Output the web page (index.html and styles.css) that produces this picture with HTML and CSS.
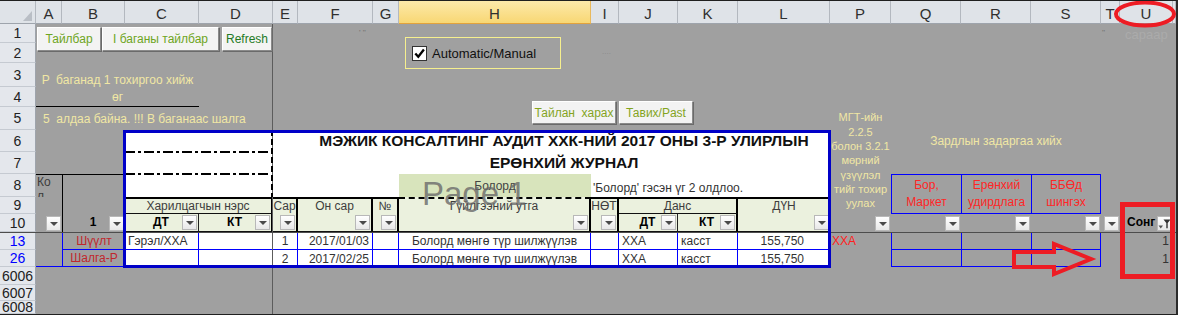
FILE: index.html
```html
<!DOCTYPE html>
<html lang="mn">
<head>
  <meta charset="UTF-8" />
  <title>Ерөнхий журнал</title>
  <link rel="stylesheet" href="styles.css">
</head>
<body>

<div class="sheet">

  <!-- баганын толгой -->
  <div class="ch corner"></div>
  <div class="ch">A</div>
  <div class="ch">B</div>
  <div class="ch">C</div>
  <div class="ch">D</div>
  <div class="ch">E</div>
  <div class="ch">F</div>
  <div class="ch">G</div>
  <div class="ch sel">H</div>
  <div class="ch">I</div>
  <div class="ch">J</div>
  <div class="ch">K</div>
  <div class="ch">L</div>
  <div class="ch">P</div>
  <div class="ch">Q</div>
  <div class="ch">R</div>
  <div class="ch">S</div>
  <div class="ch">T</div>
  <div class="ch">U</div>
  <div class="ch"></div>

  <!-- мөрийн дугаар -->
  <div class="rh">1</div>
  <div class="rh">2</div>
  <div class="rh">3</div>
  <div class="rh">4</div>
  <div class="rh">5</div>
  <div class="rh">6</div>
  <div class="rh">7</div>
  <div class="rh">8</div>
  <div class="rh">9</div>
  <div class="rh">10</div>
  <div class="rh flt">13</div>
  <div class="rh flt">26</div>
  <div class="rh">6006</div>
  <div class="rh">6007</div>
  <div class="rh">6008</div>

  <!-- тайлбар -->
  <div class="note1"><span>P  баганад 1 тохиргоо хийж</span><span>өг</span></div>
  <div class="note2">5  алдаа байна. !!! B баганаас шалга</div>

  <!-- журналын хүснэгт -->
  <div class="tbl"></div>
  <div class="ttl r6">МЭЖИК КОНСАЛТИНГ АУДИТ ХХК-НИЙ 2017 ОНЫ 3-Р УЛИРЛЫН</div>
  <div class="ttl r7">ЕРӨНХИЙ ЖУРНАЛ</div>
  <div class="pb">
    <svg width="148" height="67" viewBox="0 0 148 67">
      <line x1="0" y1="22" x2="146" y2="22" stroke="#000" stroke-width="2" stroke-dasharray="10 3 3 3"/>
      <line x1="0" y1="44" x2="146" y2="44" stroke="#000" stroke-width="2" stroke-dasharray="10 3 3 3"/>
      <line x1="147" y1="0" x2="147" y2="67" stroke="#000" stroke-width="2" stroke-dasharray="6 3"/>
    </svg>
  </div>

  <div class="ko cA r8">Ко<br>л</div>
  <div class="bline"></div>
  <div class="grn cH r8">Болорд</div>
  <div class="found">'Болорд' гэсэн үг 2 олдлоо.</div>

  <!-- толгой мөр -->
  <div class="hc top h-cd">Харилцагчын нэрс</div>
  <div class="hc top h2 br2 cE r9-10"><span class="t">Сар</span><span class="dd"></span></div>
  <div class="hc top h2 br2 cF r9-10"><span class="t">Он сар</span><span class="dd"></span></div>
  <div class="hc top h2 br2 cG r9-10"><span class="t">№</span><span class="dd"></span></div>
  <div class="hc top dash h2 br2 cH r9-10"><span class="t">Гүйлгээний утга</span><span class="dd"></span></div>
  <div class="hc top h2 br2 cI r9-10"><span class="t">НӨТ</span><span class="dd"></span></div>
  <div class="hc top h-jk">Данс</div>
  <div class="hc top h2 cL r9-10"><span class="t">ДҮН</span><span class="dd"></span></div>
  <div class="hc h1 br1 cC r10"><span class="t">ДТ</span><span class="dd"></span></div>
  <div class="hc h1 br2 cD r10"><span class="t">КТ</span><span class="dd"></span></div>
  <div class="hc h1 br1 cJ r10"><span class="t">ДТ</span><span class="dd"></span></div>
  <div class="hc h1 br2 cK r10"><span class="t">КТ</span><span class="dd"></span></div>

  <div class="fc cA r10"><span class="dd"></span></div>
  <div class="fc cB r10"><span class="t b">1</span><span class="dd"></span></div>

  <!-- өгөгдөл -->
  <div class="lbl cA r26 bb"></div>
  <div class="lbl cB r13 bl bb">Шүүлт</div>
  <div class="lbl cB r26 bl bb">Шалга-Р</div>

  <div class="d cC r13 bb">Гэрэл/ХХА</div>
  <div class="d cD r13 bb"></div>
  <div class="d cE r13 bb ctr">1</div>
  <div class="d cF r13 bb rt">2017/01/03</div>
  <div class="d cG r13 bb"></div>
  <div class="d cH r13 bb ctr">Болорд мөнгө түр шилжүүлэв</div>
  <div class="d cI r13 bb"></div>
  <div class="d cJ r13 bb">ХХА</div>
  <div class="d cK r13 bb">касст</div>
  <div class="d cL r13 bb amt">155,750</div>

  <div class="d cC r26"></div>
  <div class="d cD r26"></div>
  <div class="d cE r26 ctr">2</div>
  <div class="d cF r26 rt">2017/02/25</div>
  <div class="d cG r26"></div>
  <div class="d cH r26 ctr">Болорд мөнгө түр шилжүүлэв</div>
  <div class="d cI r26"></div>
  <div class="d cJ r26">ХХА</div>
  <div class="d cK r26">касст</div>
  <div class="d cL r26 amt">155,750</div>

  <!-- баруун талын багана -->
  <div class="mgt">МГТ-ийн<br>2.2.5<br>болон 3.2.1<br>мөрний<br>үзүүлэл<br>тийг тохир<br>уулах</div>
  <div class="zard">Зардлын задаргаа хийх</div>
  <div class="rb cQ">Бор,<br>Маркет</div>
  <div class="rb cR">Ерөнхий<br>удирдлага</div>
  <div class="rb end cS">ББӨд<br>шингэх</div>

  <div class="fc cP r10"><span class="dd"></span></div>
  <div class="fc cQ r10"><span class="dd"></span></div>
  <div class="fc cR r10"><span class="dd"></span></div>
  <div class="fc cS r10"><span class="dd"></span></div>
  <div class="fc cT r10"><span class="dd"></span></div>
  <div class="fc song cU r10">
    <span class="t">Сонг</span>
    <span class="dd flt-btn">
      <svg width="13" height="13" viewBox="0 0 13 13"><path d="M0.5 8.5h4.5l-2.25 3z" fill="#555"/><path d="M5.5 2.5h7l-2.8 3.6v5.2h-1.4v-5.2z" fill="#333"/></svg>
    </span>
  </div>

  <div class="red-txt cP r13">ХХА</div>
  <div class="bx cQ r13"></div>
  <div class="bx cR r13"></div>
  <div class="bx end cS r13"></div>
  <div class="bx cQ r26"></div>
  <div class="bx cR r26"></div>
  <div class="bx end cS r26"></div>
  <div class="num cU r13">1</div>
  <div class="num cU r26">1</div>

  <div class="frame"></div>

  <!-- хуудсан дээрх объектууд -->
  <div class="fz-v"></div>
  <div class="fz-h"></div>

  <div class="btn btn-tb">Тайлбар</div>
  <div class="btn btn-ib">I баганы тайлбар</div>
  <div class="btn btn-rf">Refresh</div>
  <div class="btn btn-th">Тайлан&nbsp;&nbsp;харах</div>
  <div class="btn btn-tv">Тавих/Past</div>

  <div class="chk-box">
    <span class="chk"><svg width="13" height="13" viewBox="0 0 13 13"><path d="M2.3 6.4l3 3.3 5.6-7.2" fill="none" stroke="#000" stroke-width="2.3"/></svg></span>
    <span>Automatic/Manual</span>
  </div>

  <div class="page-no">Page 1</div>

  <div class="tick tick1">' ''</div>
  <div class="tick tick2">....</div>
  <div class="tick tick3">''</div>
  <div class="faint">сараар</div>

  <svg class="mark-ellipse" width="66" height="30" viewBox="0 0 66 30">
    <ellipse cx="33" cy="14" rx="29" ry="11.5" fill="none" stroke="#ed1c24" stroke-width="4"/>
  </svg>
  <div class="mark-rect"></div>
  <svg class="mark-arrow" width="90" height="40" viewBox="0 0 90 40">
    <polygon points="6,12 46,12 46,4 83,19 46,34 46,27 6,27" fill="none" stroke="#ed1c24" stroke-width="4"/>
  </svg>

</div>

</body>
</html>
```

FILE: styles.css
```css
/* үндсэн тохиргоо */
body {
  margin: 0;
  background-color: #a0a0a0;
  font-family: "Liberation Sans", Arial, sans-serif;
  font-size: 12px;
  color: #333;
  overflow: hidden;
}

.sheet {
  position: relative;
  width: 1178px;
  height: 315px;
  box-sizing: border-box;
  border-top: 1px solid #1f1f1f;
  border-bottom: 1px solid #1f1f1f;
  border-right: 2px solid #2b2b2b;
  background-color: #a0a0a0;
  display: grid;
  grid-template-columns: 36px 26px 63px 74px 74px 25px 75px 26px 192px 28px 59px 60px 92px 61px 70px 70px 70px 19px 53px 3px;
  grid-template-rows: 23px 19px 20px 24px 20px 23px 22px 22px 23px 17px 18px 18px 17px 18px 16px 13px;
  overflow: hidden;
}

.sheet > div {
  box-sizing: border-box;
  min-width: 0;
}

/* баганын толгой */
.ch {
  background-color: #dfe3e8;
  border-right: 1px solid #b3b8bf;
  border-bottom: 1px solid #9ea4ac;
  display: flex;
  align-items: center;
  justify-content: center;
  padding-top: 2px;
  font-size: 15px;
  color: #2f2f2f;
}

.ch.sel {
  background: linear-gradient(#fce9aa, #f8d774);
  border-bottom-color: #e2a23c;
  border-right-color: #e9b95c;
}

.corner {
  position: relative;
}

.corner::after {
  content: "";
  position: absolute;
  right: 3px;
  bottom: 2px;
  width: 9px;
  height: 10px;
  background-color: #b9bec5;
  clip-path: polygon(100% 0, 100% 100%, 0 100%);
}

/* мөрийн дугаар */
.rh {
  grid-column: 1;
  background-color: #e4e7ec;
  border-right: 1px solid #9ea4ac;
  border-bottom: 1px solid #c5cad1;
  display: flex;
  align-items: center;
  justify-content: center;
  font-size: 14px;
  color: #222;
}

.rh.flt {
  color: #0000ff;
}

/* байрлал */
.cA { grid-column: 2; }
.cB { grid-column: 3; }
.cC { grid-column: 4; }
.cD { grid-column: 5; }
.cE { grid-column: 6; }
.cF { grid-column: 7; }
.cG { grid-column: 8; }
.cH { grid-column: 9; }
.cI { grid-column: 10; }
.cJ { grid-column: 11; }
.cK { grid-column: 12; }
.cL { grid-column: 13; }
.cP { grid-column: 14; }
.cQ { grid-column: 15; }
.cR { grid-column: 16; }
.cS { grid-column: 17; }
.cT { grid-column: 18; }
.cU { grid-column: 19; }

.r6 { grid-row: 7; }
.r7 { grid-row: 8; }
.r8 { grid-row: 9; }
.r10 { grid-row: 11; }
.r13 { grid-row: 12; }
.r26 { grid-row: 13; }
.r9-10 { grid-row: 10 / 12; }

/* тайлбар текст */
.note1 {
  grid-column: 2 / 5;
  grid-row: 4 / 6;
  border-bottom: 1px solid #000;
  display: flex;
  flex-direction: column;
  justify-content: flex-end;
  align-items: center;
  line-height: 17px;
  color: #f0e7a4;
  white-space: pre;
}

.note2 {
  grid-column: 2 / 8;
  grid-row: 6;
  display: flex;
  align-items: center;
  padding-left: 7px;
  color: #f0e7a4;
  white-space: pre;
}

/* хүснэгт */
.tbl {
  grid-column: 4 / 14;
  grid-row: 7 / 14;
  background-color: #fff;
}

.frame {
  grid-column: 4 / 14;
  grid-row: 7 / 14;
  border: 3px solid #0000c8;
  margin: 0 -1px -1px -2px;
  z-index: 3;
  pointer-events: none;
}

.ttl {
  grid-column: 7 / 14;
  display: flex;
  align-items: center;
  justify-content: center;
  font-size: 15.5px;
  font-weight: bold;
  color: #111;
  white-space: nowrap;
}

.pb {
  grid-column: 4 / 6;
  grid-row: 7 / 10;
  z-index: 2;
}

.pb svg {
  display: block;
}

.ko {
  border-top: 1px solid #000;
  line-height: 14px;
  padding-left: 1px;
  color: #3c3c3c;
  overflow: hidden;
}

.bline {
  grid-column: 3;
  grid-row: 9 / 12;
  border-top: 1px solid #000;
  border-left: 1px solid #000;
}

.grn {
  background-color: #d8e4bc;
  display: flex;
  align-items: center;
  justify-content: center;
  color: #444;
}

.found {
  grid-column: 10 / 14;
  grid-row: 9;
  display: flex;
  align-items: flex-end;
  padding: 0 0 2px 2px;
  color: #333;
  white-space: nowrap;
}

/* толгой нүднүүд */
.hc {
  background-color: #ebf1de;
  border-bottom: 1px solid #111;
  color: #3d3d3d;
  white-space: nowrap;
}

.top {
  border-top: 2px solid #000;
}

.top.dash {
  border-top-style: dashed;
}

.br1 {
  border-right: 1px solid #222;
}

.br2 {
  border-right: 2px solid #000;
}

.h-cd,
.h-jk {
  grid-row: 10;
  border-right: 2px solid #000;
  display: flex;
  align-items: center;
  justify-content: center;
}

.h-cd { grid-column: 4 / 6; }
.h-jk { grid-column: 11 / 13; }

.h2 {
  display: flex;
  flex-direction: column;
}

.h2 .t {
  line-height: 15px;
  text-align: center;
}

.h2 .dd {
  margin: auto 1px 1px auto;
}

.h1 {
  display: flex;
  align-items: flex-end;
}

.h1 .t {
  flex: 1;
  text-align: center;
  padding-left: 15px;
  line-height: 17px;
  font-weight: bold;
  color: #000;
}

.h1 .dd {
  margin: 0 1px 1px 0;
}

/* шүүлтүүрийн товч */
.fc {
  display: flex;
  align-items: flex-end;
  justify-content: flex-end;
  padding: 0 1px 1px 0;
}

.fc .t {
  flex: 1;
  line-height: 17px;
}

.fc .t.b {
  text-align: center;
  padding-left: 15px;
  font-weight: bold;
  color: #000;
}

.song .t {
  padding-left: 7px;
  font-weight: bold;
  color: #000;
  overflow: hidden;
  white-space: nowrap;
}

.dd {
  position: relative;
  flex: none;
  width: 15px;
  height: 15px;
  box-sizing: border-box;
  border: 1px solid #b8b8b8;
  background: linear-gradient(#ffffff, #e8e8e8);
}

.dd::after {
  content: "";
  position: absolute;
  left: 3px;
  top: 5px;
  border-left: 4px solid transparent;
  border-right: 4px solid transparent;
  border-top: 4px solid #4a4a4a;
}

.dd.flt-btn::after {
  display: none;
}

.flt-btn svg {
  display: block;
}

/* өгөгдлийн мөр */
.d {
  border-right: 1px solid #0000ff;
  display: flex;
  align-items: center;
  padding: 0 3px;
  white-space: nowrap;
  overflow: hidden;
  color: #333;
}

.bb { border-bottom: 1px solid #0000ff; }
.bl { border-left: 1px solid #0000ff; }
.ctr { justify-content: center; }
.rt { justify-content: flex-end; }

.amt {
  justify-content: flex-end;
  padding-right: 25px;
}

.lbl {
  display: flex;
  align-items: center;
  justify-content: center;
  color: #c0272d;
  white-space: nowrap;
}

/* баруун хэсэг */
.mgt {
  grid-column: 14;
  grid-row: 6 / 11;
  display: flex;
  flex-direction: column;
  justify-content: center;
  text-align: center;
  font-size: 11px;
  line-height: 14.3px;
  color: #f0e7a4;
  white-space: nowrap;
}

.zard {
  grid-column: 15 / 18;
  grid-row: 7;
  display: flex;
  align-items: center;
  justify-content: center;
  color: #f0e7a4;
  white-space: nowrap;
}

.rb {
  grid-row: 9 / 11;
  border: 1px solid #0000ff;
  border-right: none;
  display: flex;
  flex-direction: column;
  justify-content: center;
  text-align: center;
  line-height: 17px;
  color: #ff2626;
  white-space: nowrap;
}

.rb.end {
  border-right: 1px solid #0000ff;
}

.red-txt {
  display: flex;
  align-items: center;
  padding-left: 2px;
  color: #ff1e1e;
}

.bx {
  border-left: 1px solid #0000ff;
  border-bottom: 1px solid #0000ff;
}

.bx.end {
  border-right: 1px solid #0000ff;
}

.num {
  display: flex;
  align-items: center;
  justify-content: flex-end;
  padding-right: 4px;
  color: #333;
}

/* царцаасан мөр, багана */
.fz-v {
  position: absolute;
  left: 272px;
  top: 23px;
  bottom: 0;
  width: 1px;
  background-color: #5c5c5c;
  z-index: 1;
}

.fz-h {
  position: absolute;
  left: 0;
  right: 0;
  top: 231px;
  height: 1px;
  background-color: #4d4d4d;
  z-index: 1;
}

/* товчнууд */
.btn {
  position: absolute;
  top: 26px;
  height: 24px;
  box-sizing: border-box;
  background-color: #f3f3f3;
  border: 1px solid;
  border-color: #fff #8a8a8a #8a8a8a #fff;
  box-shadow: 1px 1px 0 #6a6a6a;
  display: flex;
  align-items: center;
  justify-content: center;
  color: #6ea522;
  white-space: nowrap;
  z-index: 4;
}

.btn-tb { left: 37px; width: 64px; }
.btn-ib { left: 102px; width: 117px; }
.btn-rf { left: 222px; width: 50px; color: #247a24; }

.btn-th,
.btn-tv {
  top: 100px;
  height: 23px;
  color: #84a41e;
}

.btn-th { left: 532px; width: 84px; }
.btn-tv { left: 619px; width: 74px; }

.chk-box {
  position: absolute;
  left: 405px;
  top: 36px;
  width: 156px;
  height: 32px;
  box-sizing: border-box;
  border: 1px solid #f6ef8e;
  display: flex;
  align-items: center;
  gap: 5px;
  padding-left: 6px;
  font-size: 13px;
  color: #111;
}

.chk {
  width: 15px;
  height: 15px;
  box-sizing: border-box;
  background-color: #fff;
  border: 1px solid #333;
}

.chk svg {
  display: block;
}

.page-no {
  position: absolute;
  left: 422px;
  top: 176px;
  font-size: 33px;
  line-height: 33px;
  color: rgba(105, 105, 105, 0.8);
  white-space: nowrap;
  pointer-events: none;
  z-index: 4;
}

.tick {
  position: absolute;
  font-size: 8px;
  color: #6f6f6f;
}

.tick1 { left: 359px; top: 27px; }
.tick2 { left: 602px; top: 46px; color: #8a8a8a; }
.tick3 { left: 1102px; top: 27px; }

.faint {
  position: absolute;
  left: 1125px;
  top: 26px;
  font-size: 13px;
  color: #ababab;
}

/* улаан тэмдэглэгээ */
.mark-ellipse {
  position: absolute;
  left: 1112px;
  top: -1px;
  z-index: 5;
}

.mark-rect {
  position: absolute;
  left: 1120px;
  top: 201px;
  width: 55px;
  height: 77px;
  border: 5px solid #ed1c24;
  z-index: 5;
}

.mark-arrow {
  position: absolute;
  left: 1008px;
  top: 239px;
  z-index: 5;
}
```
